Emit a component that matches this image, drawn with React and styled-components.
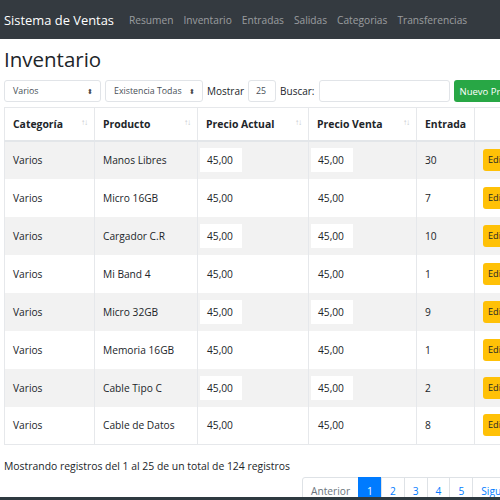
import React from 'react';
import styled, { createGlobalStyle } from 'styled-components';

const GlobalStyle = createGlobalStyle`
    html, body {
        margin: 0;
        padding: 0;
        width: 500px;
        height: 500px;
        overflow: hidden;
        background: #fff;
        font-family: "Open Sans", "Noto Sans", Arial, sans-serif;
        color: #212529;
    }
    * { box-sizing: border-box; }
`;

const Navbar = styled.nav`
    height: 39px;
    background: #343a40;
    display: flex;
    align-items: center;
    padding: 0 4px;
    white-space: nowrap;
`;

const Brand = styled.span`
    color: #fff;
    font-size: 12.9px;
    margin-right: 15px;
`;

const NavLink = styled.a`
    color: rgba(255, 255, 255, 0.5);
    font-size: 10.2px;
    margin-right: 10px;
    text-decoration: none;
`;

const Page = styled.main`
    padding: 0 4px;
    width: 560px;
`;

const Title = styled.h1`
    margin: 4px 0 5px;
    font-size: 20.5px;
    font-weight: 400;
    line-height: 32px;
`;

const Toolbar = styled.div`
    display: flex;
    align-items: center;
    height: 22px;
    gap: 4px;
    white-space: nowrap;
`;

const Select = styled.div`
    width: ${p => p.w}px;
    height: 22px;
    border: 1px solid #e1e4e8;
    border-radius: 3px;
    display: flex;
    align-items: center;
    justify-content: space-between;
    padding: 0 7px 0 8px;
    font-size: 8.8px;
    color: #495057;
    span.arrow { font-size: 7px; color: #444; }
`;

const Label = styled.span`
    font-size: 10px;
    color: #212529;
    margin: ${p => p.m || '0'};
`;

const Input = styled.div`
    width: ${p => p.w}px;
    height: 22px;
    border: 1px solid #e1e4e8;
    border-radius: 3px;
    font-size: 8.8px;
    color: #495057;
    display: flex;
    align-items: center;
    padding: 0 7px;
`;

const GreenButton = styled.button`
    height: 22px;
    background: #28a745;
    color: #fff;
    border: 0;
    border-radius: 3px;
    padding: 0 6px;
    font-family: inherit;
    font-size: 9.5px;
`;

const Table = styled.table`
    margin-top: 5px;
    border-collapse: collapse;
    table-layout: fixed;
    width: 560px;
    font-size: 10.2px;
`;

const Th = styled.th`
    width: ${p => p.w}px;
    height: 33px;
    text-align: left;
    padding: 0 8px;
    font-weight: 700;
    font-size: 10.4px;
    border: 1px solid #e6e8eb;
    border-bottom: 2px solid #e3e6e9;
    position: relative;
`;

const SortIcon = styled.span`
    position: absolute;
    right: 7px;
    top: 8px;
    font-size: 8px;
    font-weight: 400;
    color: #c4c8cc;
    letter-spacing: -1px;
`;

const Tr = styled.tr`
    height: 38px;
    background: ${p => (p.striped ? '#f2f2f2' : '#fff')};
`;

const Td = styled.td`
    padding: 0 8px;
    border: 1px solid #e6e8eb;
    border-top: 0;
    border-bottom: 0;
    vertical-align: middle;
    white-space: nowrap;
    &:last-child { border-right: 0; }
`;

const PriceCell = styled.td`
    padding: 0 2px;
    border: 1px solid #e6e8eb;
    border-top: 0;
    border-bottom: 0;
    vertical-align: middle;
`;

const PriceBox = styled.span`
    display: inline-block;
    width: 42px;
    height: 24px;
    line-height: 24px;
    padding-left: 7px;
    background: #fff;
`;

const EditButton = styled.span`
    display: inline-block;
    background: #ffc107;
    color: #212529;
    border-radius: 3px;
    height: 22px;
    line-height: 22px;
    padding: 0 5px;
    font-size: 9.2px;
`;

const LastRow = styled.tr`
    height: 1px;
    td { border-top: 1px solid #e6e8eb; padding: 0; }
`;

const Info = styled.div`
    margin-top: 12px;
    font-size: 10.4px;
    height: 17px;
    line-height: 17px;
`;

const Pagination = styled.ul`
    list-style: none;
    margin: 2px 0 0 299px;
    padding: 0;
    display: flex;
`;

const PageItem = styled.li`
    height: 26px;
    line-height: 26px;
    padding: 0 ${p => (p.wide ? 8 : 8)}px;
    border: 1px solid #dee2e6;
    margin-left: -1px;
    font-size: 10.2px;
    color: ${p => (p.active ? '#fff' : p.disabled ? '#6c757d' : '#007bff')};
    background: ${p => (p.active ? '#007bff' : '#fff')};
    border-color: ${p => (p.active ? '#007bff' : '#dee2e6')};
    &:first-child { border-radius: 3px 0 0 3px; }
`;

const BottomBar = styled.div`
    position: fixed;
    left: 0;
    right: 0;
    bottom: 0;
    height: 3px;
    background: #2f3a40;
`;

const rows = [
    ['Manos Libres', 30],
    ['Micro 16GB', 7],
    ['Cargador C.R', 10],
    ['Mi Band 4', 1],
    ['Micro 32GB', 9],
    ['Memoria 16GB', 1],
    ['Cable Tipo C', 2],
    ['Cable de Datos', 8],
];

const links = ['Resumen', 'Inventario', 'Entradas', 'Salidas', 'Categorias', 'Transferencias'];

export default function App() {
    return (
        <>
            <GlobalStyle />
            <Navbar>
                <Brand>Sistema de Ventas</Brand>
                {links.map(l => <NavLink key={l}>{l}</NavLink>)}
            </Navbar>
            <Page>
                <Title>Inventario</Title>
                <Toolbar>
                    <Select w={97}><span>Varios</span><span className="arrow">⬍</span></Select>
                    <Select w={98}><span>Existencia Todas</span><span className="arrow">⬍</span></Select>
                    <Label>Mostrar</Label>
                    <Input w={28}>25</Input>
                    <Label>Buscar:</Label>
                    <Input w={131} />
                    <GreenButton>Nuevo Producto</GreenButton>
                </Toolbar>
                <Table>
                    <thead>
                        <tr>
                            <Th w={90}>Categoría<SortIcon>↑↓</SortIcon></Th>
                            <Th w={103}>Producto<SortIcon>↑↓</SortIcon></Th>
                            <Th w={111}>Precio Actual<SortIcon>↑↓</SortIcon></Th>
                            <Th w={108}>Precio Venta<SortIcon>↑↓</SortIcon></Th>
                            <Th w={58}>Entrada</Th>
                            <Th w={90}></Th>
                        </tr>
                    </thead>
                    <tbody>
                        {rows.map(([name, qty], i) => (
                            <Tr key={name} striped={i % 2 === 0}>
                                <Td>Varios</Td>
                                <Td>{name}</Td>
                                <PriceCell><PriceBox>45,00</PriceBox></PriceCell>
                                <PriceCell><PriceBox>45,00</PriceBox></PriceCell>
                                <Td>{qty}</Td>
                                <Td><EditButton>Editar</EditButton></Td>
                            </Tr>
                        ))}
                        <LastRow><td /><td /><td /><td /><td /><td /></LastRow>
                    </tbody>
                </Table>
                <Info>Mostrando registros del 1 al 25 de un total de 124 registros</Info>
                <Pagination>
                    <PageItem disabled wide>Anterior</PageItem>
                    <PageItem active>1</PageItem>
                    <PageItem>2</PageItem>
                    <PageItem>3</PageItem>
                    <PageItem>4</PageItem>
                    <PageItem>5</PageItem>
                    <PageItem wide>Siguiente</PageItem>
                </Pagination>
            </Page>
            <BottomBar />
        </>
    );
}
